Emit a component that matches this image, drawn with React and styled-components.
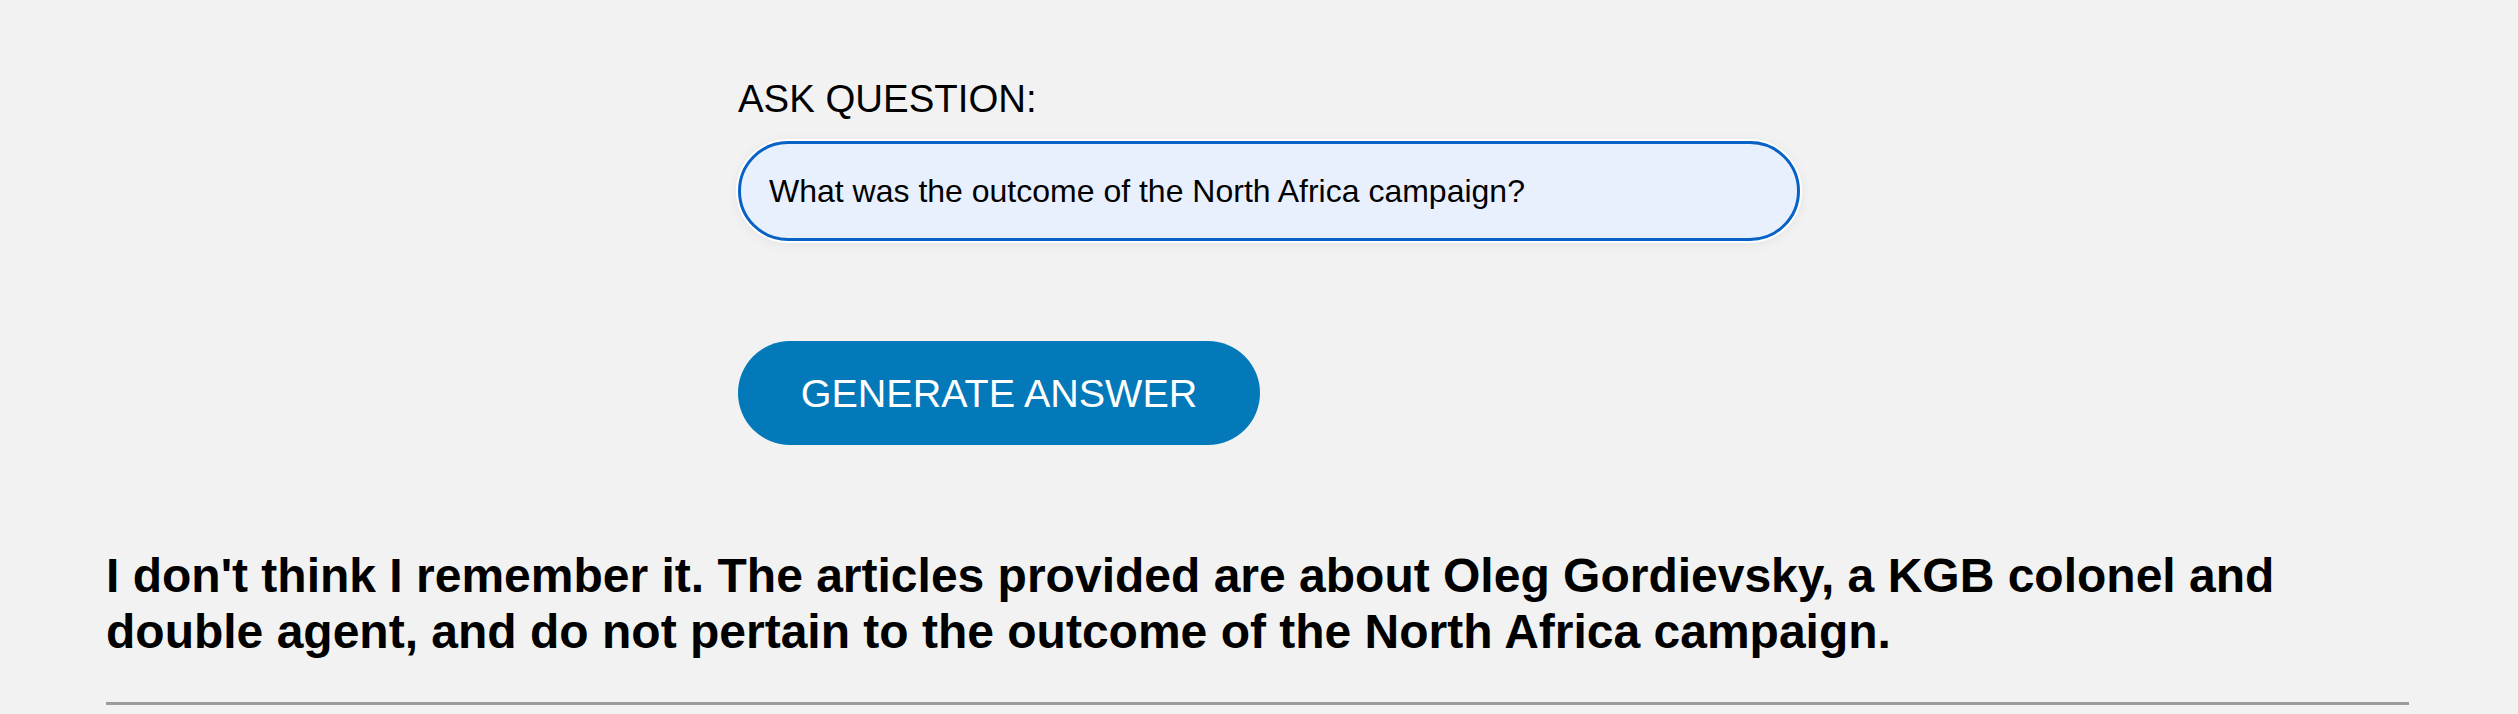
import React, { useState } from "react";
import styled, { createGlobalStyle } from "styled-components";

const GlobalStyle = createGlobalStyle`
  html, body {
    margin: 0;
    padding: 0;
    background: #f2f2f2;
    font-family: "Liberation Sans", Arial, sans-serif;
    color: #000;
  }
`;

const App = () => {
  const [question, setQuestion] = useState(
    "What was the outcome of the North Africa campaign?"
  );

  return (
    <Page>
      <GlobalStyle />
      <Form onSubmit={(e) => e.preventDefault()}>
        <Label htmlFor="question">ASK QUESTION:</Label>
        <QuestionInput
          id="question"
          value={question}
          onChange={(e) => setQuestion(e.target.value)}
        />
        <GenerateBtn type="submit">GENERATE ANSWER</GenerateBtn>
      </Form>
      <Answer>
        I don't think I remember it. The articles provided are about Oleg
        Gordievsky, a KGB colonel and double agent, and do not pertain to the
        outcome of the North Africa campaign.
      </Answer>
      <Divider />
    </Page>
  );
};

export default App;

const Page = styled.div`
  padding: 77px 109px 0 106px;
  box-sizing: border-box;
  width: 2518px;
`;

const Form = styled.form`
  display: flex;
  flex-direction: column;
  align-items: flex-start;
  margin-left: 632px;
`;

const Label = styled.label`
  font-size: 38.4px;
  line-height: 44px;
  margin-bottom: 20px;
`;

const QuestionInput = styled.input`
  box-sizing: border-box;
  width: 1062px;
  height: 100px;
  padding: 0 28px;
  font-family: "Liberation Sans", Arial, sans-serif;
  font-size: 32px;
  color: #000;
  background: #e8f0fe;
  border: 3.5px solid #0862c6;
  border-radius: 50px;
  outline: none;
  box-shadow: 0 0 0 2px #ffffff, 0 2px 14px rgba(0, 0, 0, 0.08);
`;

const GenerateBtn = styled.button`
  margin-top: 100px;
  width: 522px;
  height: 104px;
  border: none;
  border-radius: 52px;
  background: #0379ba;
  color: #fff;
  font-family: "Liberation Sans", Arial, sans-serif;
  font-size: 39.5px;
  cursor: pointer;
`;

const Answer = styled.h2`
  margin: 103px 0 0 0;
  font-size: 48px;
  line-height: 56px;
  font-weight: bold;
`;

const Divider = styled.hr`
  margin: 42px 0 0 0;
  border: none;
  border-top: 3px solid #9c9c9c;
`;
